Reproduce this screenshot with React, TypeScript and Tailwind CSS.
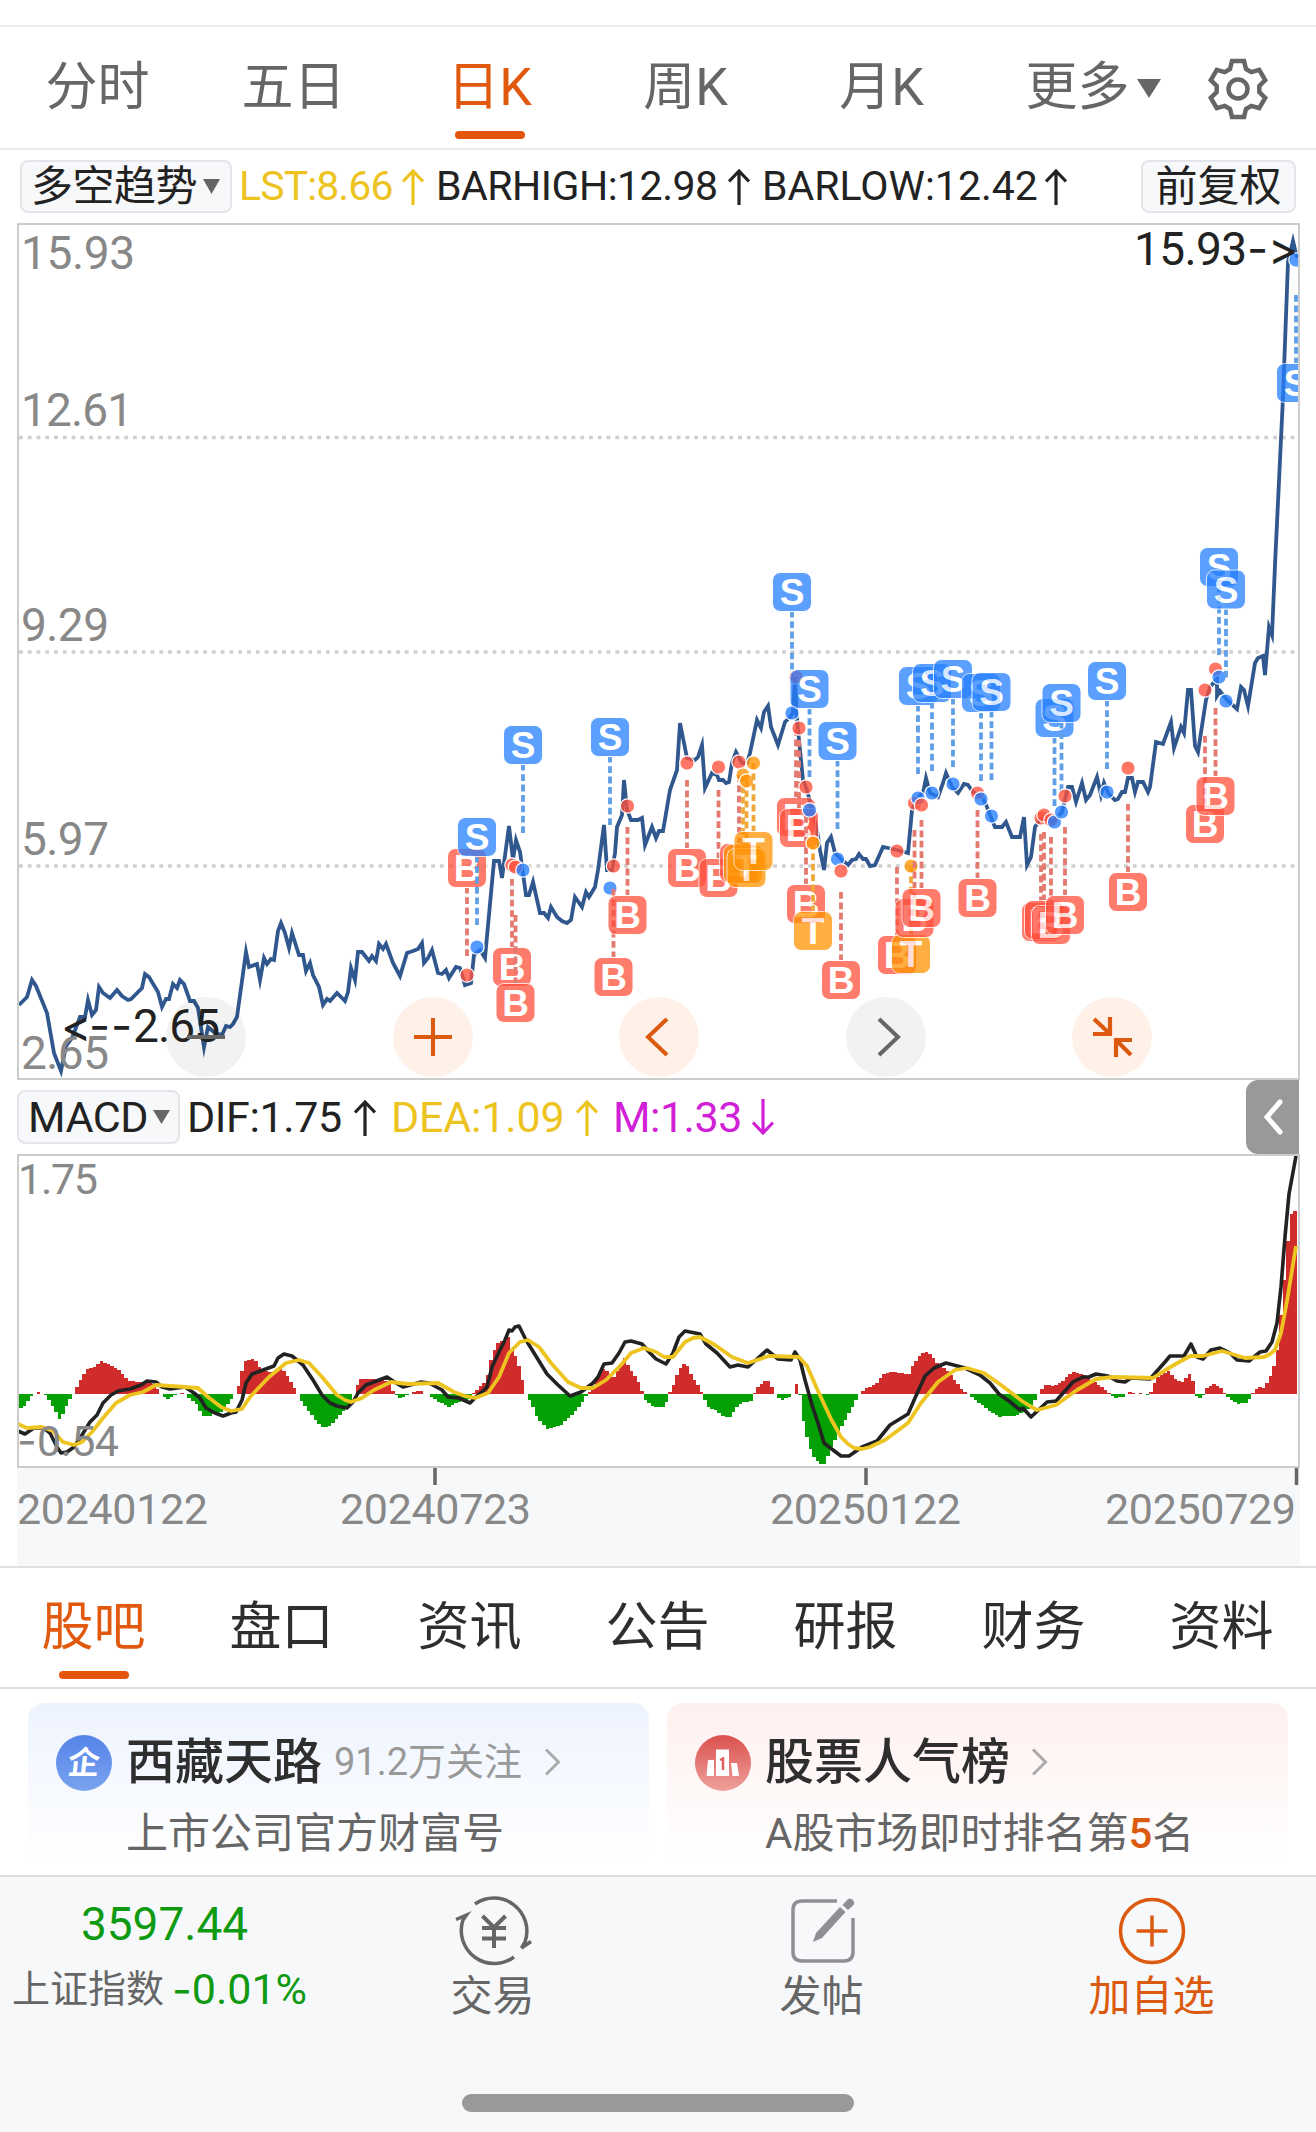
import { clsx } from "clsx"
import type { ReactNode } from "react"

/**
 * Stock detail page: K-line chart with buy/sell markers, MACD panel,
 * community tabs and the bottom action bar.
 */

type Point = [number, number]

type MarkerType = "B" | "S" | "T"

interface Marker {
  type: MarkerType
  x: number
  dot: number
  badge: number
}

const PERIOD_TABS = ["分时", "五日", "日K", "周K", "月K"]
const INFO_TABS = ["股吧", "盘口", "资讯", "公告", "研报", "财务", "资料"]

const PRICE_LINE =
  "19,1005 23,1001 27,997 32,980 36,986 47,1013 54,1053 61,1071 66,1046 72,1038 80,1017 85,1017 88,1000 92,1015 96,1010 99,987 103,993 110,998 117,990 122,996 128,1000 131,999 142,988 145,974 149,977 158,992 162,1007 166,999 169,999 173,984 177,988 180,980 184,984 190,1001 194,1001 198,1008 204,1047 208,1027 215,1033 222,1035 226,1026 230,1027 233,1024 237,1017 246,952 249,967 257,964 260,980 264,958 267,964 271,959 274,960 278,931 281,923 285,933 289,948 292,933 299,955 303,955 306,971 310,963 313,975 319,987 323,1005 327,999 330,1001 337,993 345,1001 348,992 351,968 355,980 358,952 362,952 369,961 372,956 376,961 379,944 383,949 386,944 393,963 400,976 407,953 413,951 418,949 422,943 424,963 428,958 432,950 438,973 442,974 446,970 449,978 456,967 460,968 465,985 471,983 474,955 480,950 485,958 494,861 499,861 502,878 509,826 513,860 516,840 520,852 526,895 529,895 533,882 540,913 544,913 548,918 551,907 557,917 562,921 567,923 571,920 575,897 582,907 586,892 589,897 595,887 598,870 604,825 607,870 612,870 615,853 617,827 622,815 624,780 627,810 631,820 638,820 642,818 645,845 652,827 656,838 659,831 663,831 670,790 677,770 680,723 687,758 695,760 698,757 702,745 705,788 712,773 717,775 719,780 723,780 726,783 729,782 732,763 736,752 742,763 747,763 750,753 757,720 761,728 764,712 768,706 771,727 778,745 785,722 790,717 793,713 795,677 797,720 803,780 807,790 817,830 820,850 824,870 827,843 831,837 835,853 842,860 848,865 852,860 856,859 859,854 863,859 866,859 870,866 875,865 883,847 888,848 897,850 908,853 912,810 918,797 923,793 926,778 930,793 938,797 943,783 946,773 952,787 958,793 964,784 968,785 973,792 982,797 987,807 992,820 995,827 1002,827 1006,822 1012,837 1020,837 1024,817 1027,865 1031,857 1035,827 1042,817 1053,822 1062,812 1068,787 1072,787 1076,802 1082,783 1086,800 1090,795 1097,777 1101,795 1104,783 1108,793 1115,800 1118,799 1122,792 1125,792 1128,778 1132,778 1135,792 1138,782 1143,782 1148,792 1150,787 1156,742 1163,744 1171,722 1174,748 1181,727 1184,733 1188,690 1191,690 1195,746 1198,752 1206,700 1210,687 1217,679 1217,696 1220,691 1227,700 1237,709 1241,687 1244,690 1248,706 1255,663 1258,658 1263,656 1265,675 1269,627 1272,635 1275,565 1283,397 1288,262 1293,241 1297,258"

const MARKERS: Marker[] = [
  { type: "B", x: 467, dot: 975, badge: 868 },
  { type: "S", x: 477, dot: 947, badge: 837 },
  { type: "B", x: 512, dot: 865, badge: 967 },
  { type: "B", x: 515.5, dot: 867, badge: 1003 },
  { type: "S", x: 523, dot: 870, badge: 745 },
  { type: "S", x: 610, dot: 888, badge: 737 },
  { type: "B", x: 613.5, dot: 866, badge: 977 },
  { type: "B", x: 627.5, dot: 806, badge: 915 },
  { type: "B", x: 687, dot: 763, badge: 868 },
  { type: "B", x: 718.5, dot: 767, badge: 878 },
  { type: "B", x: 739, dot: 762, badge: 863 },
  { type: "T", x: 743, dot: 775, badge: 864 },
  { type: "T", x: 746.5, dot: 781, badge: 868 },
  { type: "T", x: 753.5, dot: 763, badge: 851 },
  { type: "S", x: 792, dot: 713, badge: 592 },
  { type: "B", x: 796, dot: 677, badge: 817 },
  { type: "B", x: 799, dot: 728, badge: 828 },
  { type: "B", x: 806, dot: 787, badge: 904 },
  { type: "S", x: 809.5, dot: 810, badge: 689 },
  { type: "T", x: 813, dot: 843, badge: 931 },
  { type: "S", x: 837.5, dot: 859, badge: 741 },
  { type: "B", x: 841, dot: 871, badge: 980 },
  { type: "B", x: 897, dot: 851, badge: 955 },
  { type: "T", x: 911, dot: 866, badge: 954 },
  { type: "B", x: 914.5, dot: 803, badge: 918 },
  { type: "S", x: 918, dot: 798, badge: 686 },
  { type: "B", x: 921.5, dot: 805, badge: 908 },
  { type: "S", x: 932, dot: 793, badge: 683 },
  { type: "S", x: 953, dot: 784, badge: 679 },
  { type: "B", x: 977.5, dot: 793, badge: 898 },
  { type: "S", x: 981, dot: 799, badge: 693 },
  { type: "S", x: 991.5, dot: 816, badge: 692 },
  { type: "B", x: 1041, dot: 818, badge: 922 },
  { type: "B", x: 1044, dot: 815, badge: 920 },
  { type: "B", x: 1051, dot: 820, badge: 925 },
  { type: "S", x: 1054.5, dot: 822, badge: 718 },
  { type: "S", x: 1061.5, dot: 812, badge: 703 },
  { type: "B", x: 1065, dot: 796, badge: 915 },
  { type: "S", x: 1107, dot: 792, badge: 681 },
  { type: "B", x: 1128, dot: 768, badge: 892 },
  { type: "B", x: 1205, dot: 690, badge: 824 },
  { type: "B", x: 1215.5, dot: 669, badge: 796 },
  { type: "S", x: 1219, dot: 677, badge: 567 },
  { type: "S", x: 1226, dot: 701, badge: 589.5 },
  { type: "S", x: 1296, dot: 260, badge: 383 },
]

const MARKER_COLORS: Record<MarkerType, string> = {
  B: "#ff4f3c",
  S: "#257fff",
  T: "#ff9303",
}

const DASH_COLORS: Record<MarkerType, string> = {
  B: "#e4796f",
  S: "#5f9fe6",
  T: "#f0a83a",
}

const ZERO_Y = 1393.7
const BAR_STEP = 3.51

// Histogram key values, bars in between are interpolated
const HIST: Point[] = [
  [18, -14], [23, -14], [26, -10], [30, -3], [35, 0], [38, 2], [42, 0], [46, -2], [51, -10], [55, -17], [60, -27], [65, -15], [71, -3], [73, 0],
  [76, 0], [77, 7], [82, 17], [87, 25], [97, 27], [100, 34], [105, 31], [111, 28], [120, 23], [128, 13], [135, 12], [147, 12], [154, 10], [160, 1],
  [162, -2], [168, -5], [175, -1], [181, 1], [185, 1], [188, -3], [196, -10], [202, -22], [210, -22], [223, -17], [231, -6], [235, 0], [237, 2],
  [239, 10], [242, 23], [245, 33], [252, 35], [257, 32], [260, 25], [269, 22], [276, 22], [282, 25], [288, 17], [295, 5], [298, 0], [303, -10],
  [311, -20], [318, -30], [324, -34], [330, -32], [337, -25], [349, -12], [354, -1], [357, 7], [361, 15], [372, 15], [381, 14], [389, 11],
  [393, 2], [396, -1], [401, -5], [408, -1], [414, 2], [421, 3], [424, 0], [429, -1], [438, -8], [449, -13], [459, -8], [471, -5], [473, 0],
  [478, 5], [486, 12], [490, 30], [494, 43], [499, 52], [505, 53], [509, 57], [511, 45], [517, 36], [522, 17], [525, 1], [527, -2], [532, -10],
  [537, -23], [547, -35], [560, -32], [570, -23], [579, -13], [587, -1], [590, 2], [595, 12], [602, 25], [606, 23], [614, 17], [619, 25], [624, 37],
  [629, 27], [638, 13], [643, 0], [646, -7], [654, -13], [665, -13], [669, 0], [673, 7], [677, 18], [683, 31], [688, 27], [694, 14], [700, 7],
  [703, -2], [709, -14], [717, -17], [723, -23], [730, -23], [736, -14], [742, -9], [751, -7], [754, 0], [757, 6], [767, 15], [772, 7], [775, 0],
  [778, -4], [782, -6], [791, -3], [793, 0], [795, 10], [797, 9], [798, 0], [800, -1], [802, -21], [807, -43], [812, -61], [818, -68], [824, -72],
  [828, -62], [833, -50], [841, -34], [850, -18], [858, -3], [860, 0], [864, 4], [877, 10], [883, 19], [890, 22], [904, 20], [908, 18], [913, 29],
  [919, 37], [925, 43], [932, 38], [938, 29], [946, 24], [953, 16], [961, 5], [968, 0], [974, -5], [988, -16], [999, -23], [1014, -22], [1026, -18],
  [1035, -7], [1039, 0], [1042, 5], [1047, 10], [1054, 7], [1062, 12], [1073, 22], [1085, 18], [1096, 11], [1106, 3], [1110, 0], [1115, -4],
  [1125, -3], [1127, 1], [1131, 2], [1136, 0], [1141, 1], [1146, -2], [1150, -1], [1153, 7], [1157, 16], [1169, 23], [1176, 14], [1184, 11],
  [1187, 18], [1191, 21], [1195, 5], [1196, -2], [1202, -5], [1204, 0], [1207, 6], [1214, 10], [1222, 5], [1225, 0], [1230, -5], [1237, -10],
  [1247, -9], [1252, 0], [1258, 7], [1264, 6], [1268, 12], [1272, 21], [1277, 40], [1281, 80], [1285, 120], [1289, 165], [1292, 184], [1297, 181],
]

const DIF_LINE =
  "18,1431 25,1434 34,1428 44,1428 50,1433 57,1447 61,1453 67,1452 74,1447 82,1435 90,1422 97,1415 103,1403 111,1395 118,1391 130,1389 141,1385 147,1381 156,1382 162,1387 170,1389 185,1387 194,1393 200,1398 206,1408 215,1413 223,1416 231,1413 236,1412 242,1400 246,1383 252,1374 263,1370 274,1366 278,1358 284,1354 292,1356 303,1365 313,1380 322,1395 330,1403 337,1406 347,1408 353,1402 358,1393 366,1385 379,1380 387,1377 396,1383 403,1387 414,1384 421,1382 429,1383 442,1390 448,1397 459,1398 470,1403 476,1397 482,1392 487,1387 492,1367 499,1352 505,1340 509,1330 512,1331 515,1327 519,1326 526,1340 534,1353 547,1374 558,1385 570,1396 581,1392 593,1383 598,1377 604,1364 612,1363 619,1353 625,1342 631,1341 642,1344 650,1353 656,1359 666,1364 673,1353 679,1337 685,1331 700,1334 706,1344 717,1353 730,1367 738,1365 748,1367 757,1359 767,1350 778,1359 791,1360 795,1352 800,1360 805,1380 812,1405 818,1423 824,1443 833,1450 841,1456 849,1456 862,1447 877,1441 890,1425 908,1414 915,1398 925,1376 934,1368 946,1363 965,1368 980,1375 990,1383 999,1394 1009,1401 1020,1410 1023,1408 1031,1417 1047,1402 1056,1401 1064,1392 1073,1382 1083,1377 1089,1377 1096,1374 1108,1376 1117,1381 1125,1382 1131,1378 1150,1379 1157,1371 1165,1362 1170,1356 1184,1356 1191,1344 1197,1357 1203,1359 1211,1350 1220,1348 1230,1353 1237,1360 1249,1361 1260,1352 1266,1351 1272,1342 1277,1323 1281,1287 1285,1237 1289,1194 1296,1156"

const DEA_LINE =
  "18,1424 27,1428 42,1427 53,1431 63,1442 74,1445 82,1442 92,1432 103,1418 116,1403 130,1395 143,1392 156,1385 185,1387 198,1388 208,1397 221,1407 231,1411 242,1409 250,1397 269,1377 286,1363 299,1360 309,1363 322,1377 337,1395 345,1400 351,1402 362,1398 374,1390 391,1382 408,1384 438,1383 454,1392 465,1396 475,1398 488,1393 499,1377 509,1353 520,1342 528,1340 539,1347 551,1363 568,1382 581,1388 593,1388 606,1380 621,1365 631,1353 644,1348 656,1352 664,1357 673,1357 685,1342 693,1338 700,1337 715,1345 732,1357 748,1363 769,1356 799,1357 807,1366 818,1391 831,1419 841,1437 848,1444 854,1448 862,1449 870,1447 885,1440 908,1423 921,1403 938,1382 955,1370 967,1368 984,1373 1001,1385 1022,1401 1030,1406 1037,1410 1056,1405 1077,1390 1096,1379 1113,1377 1153,1378 1167,1369 1190,1356 1203,1356 1222,1351 1245,1358 1264,1357 1270,1354 1275,1350 1281,1333 1287,1301 1296,1246"

function histAt(x: number): number {
  for (let i = 1; i < HIST.length; i++) {
    const [x0, v0] = HIST[i - 1]
    const [x1, v1] = HIST[i]
    if (x <= x1) return v0 + ((v1 - v0) * (x - x0)) / (x1 - x0)
  }
  return HIST[HIST.length - 1][1]
}

const BARS: Point[] = Array.from({ length: 364 }, (_, i) => {
  const x = 19 + i * BAR_STEP
  return [x, histAt(x + BAR_STEP / 2)]
})

function TradeMarker({ type, x, dot, badge }: Marker) {
  const above = badge < dot
  const dashStart = above ? badge + 20 : badge - 20
  const dashEnd = above ? badge + 88 : badge - 88

  return (
    <g>
      <line x1={x} x2={x} y1={dashEnd} y2={dashStart} stroke={DASH_COLORS[type]} strokeWidth="3.8" strokeDasharray="6.8 3.6" />
      <g opacity="0.75">
        <rect x={x - 19.5} y={badge - 19.5} width="39" height="39" rx="8" fill={MARKER_COLORS[type]} stroke="#fff" strokeWidth="1" />
        <text x={x} y={badge + 13} fill="#fff" fontSize="37" fontWeight="700" textAnchor="middle" className="font-['Liberation_Sans',sans-serif]">
          {type}
        </text>
      </g>
      <circle cx={x} cy={dot} r="7.2" fill={MARKER_COLORS[type]} fillOpacity="0.78" stroke="#fff" strokeWidth="1.2" />
    </g>
  )
}

function PriceChart() {
  const levels = [
    { label: "15.93", y: 269, w: 111 },
    { label: "12.61", y: 426, w: 109 },
    { label: "9.29", y: 641, w: 85 },
    { label: "5.97", y: 855, w: 85 },
    { label: "2.65", y: 1069, w: 85 },
  ]

  return (
    <svg className="block h-full w-full" viewBox="19 225 1279 853">
      {[437.5, 652, 866].map((y) => (
        <line key={y} x1="19" x2="1298" y1={y} y2={y} stroke="#cfcfcf" strokeWidth="3.5" strokeDasharray="3.8 4.97" />
      ))}
      <polyline points={PRICE_LINE} fill="none" stroke="#30588f" strokeWidth="3.8" strokeMiterlimit="6" />
      {levels.map((l) => (
        <text key={l.label} x="21" y={l.y} textLength={l.w + 3} fill="#888" fontSize="46">
          {l.label}
        </text>
      ))}
      {MARKERS.map((m, i) => (
        <TradeMarker key={i} {...m} />
      ))}
      <g fill="#222" fontSize="46">
        <text x="1134" y="265" textLength="113">15.93</text>
        <text y="265" className="font-[Inter,sans-serif]">
          <tspan x="1247">-</tspan>
          <tspan x="1268">&gt;</tspan>
        </text>
        <text y="1042" className="font-[Inter,sans-serif]">
          <tspan x="61">&lt;</tspan>
          <tspan x="89">-</tspan>
          <tspan x="111">-</tspan>
        </text>
        <text x="133" y="1042" textLength="87">2.65</text>
      </g>
    </svg>
  )
}

function ChartControl({ tone, children }: { tone: "gray" | "orange"; children: ReactNode }) {
  return (
    <button
      className={clsx(
        "flex h-20 w-20 items-center justify-center rounded-full",
        tone === "gray" ? "bg-black/5 text-[#666]" : "bg-[#ff6a1a]/10 text-[#dc5a10]",
      )}
    >
      <svg className="h-20 w-20" viewBox="-40 -40 80 80" fill="none" stroke="currentColor" strokeWidth="4">
        {children}
      </svg>
    </button>
  )
}

function MacdChart() {
  return (
    <svg className="block h-full w-full" viewBox="19 1156 1279 310">
      {BARS.map(([x, v]) => (
        <rect
          key={x}
          x={x}
          y={v > 0 ? ZERO_Y - v : ZERO_Y}
          width={BAR_STEP}
          height={Math.abs(v) < 0.4 ? 0 : Math.abs(v)}
          fill={v > 0 ? "#d02c2c" : "#04a004"}
          shapeRendering="crispEdges"
        />
      ))}
      <polyline points={DIF_LINE} fill="none" stroke="#222" strokeWidth="3.6" strokeLinejoin="round" />
      <polyline points={DEA_LINE} fill="none" stroke="#edc420" strokeWidth="3.8" strokeLinejoin="round" />
      <g fill="#888" fontSize="43">
        <text x="18" y="1194" textLength="80">1.75</text>
        <text x="17" y="1456" className="font-[Inter,sans-serif]">-</text>
        <text x="37" y="1456" textLength="82">0.54</text>
      </g>
    </svg>
  )
}

function Triangle({ className }: { className: string }) {
  return (
    <svg className={className} viewBox="0 0 24 20" preserveAspectRatio="none" fill="#666">
      <path d="M0 0h24L12 20z" />
    </svg>
  )
}

function Arrow({ down = false }: { down?: boolean }) {
  return (
    <svg className={clsx("h-[37px] w-[22px]", down && "rotate-180")} viewBox="0 0 22 37" fill="none" stroke="currentColor" strokeWidth="3.2">
      <path d="M11 37V3M1 13.500L11 3l10 10.500" />
    </svg>
  )
}

function ChevronRight() {
  return (
    <svg className="h-[28px] w-[17px]" viewBox="0 0 17 28" fill="none" stroke="#aaa" strokeWidth="3">
      <path d="M2 1.500L14.500 14 2 26.500" />
    </svg>
  )
}

export default function App() {
  return (
    <div className="flex h-[2132px] w-[1316px] flex-col overflow-hidden bg-white font-[Roboto,'Noto_Sans_CJK_SC',sans-serif] whitespace-nowrap text-[#222]">
      <div className="h-[27px] shrink-0 border-b-2 border-[#ebebeb]" />

      {/* Period tabs */}
      <div className="flex h-[123px] shrink-0 border-b-2 border-[#ebebeb] text-[52px] text-[#666]">
        {PERIOD_TABS.map((tab) => (
          <div key={tab} className={clsx("flex w-[196px] flex-col items-center", tab === "日K" && "text-[#e0590f]")}>
            <span className="mt-[19px] mr-px leading-[84px]">{tab}</span>
            {tab === "日K" && <span className="mt-px h-2 w-[70px] rounded-full bg-[#e4560a]" />}
          </div>
        ))}
        <div className="flex w-[226px] items-start justify-center gap-[7px]">
          <span className="mt-[19px] leading-[84px]">更多</span>
          <Triangle className="mt-[52px] h-[19px] w-6" />
        </div>
        <svg className="mt-[28px] h-[68px] w-[64px]" viewBox="-32 -34 64 68" fill="none" stroke="#666" strokeWidth="4.500">
          <path d="M-8 -20L-6 -28L6 -28L8 -20L13.300 -16.900L21.200 -19.200L27.200 -8.800L21.300 -3.100V3.100L27.200 8.800L21.200 19.200L13.300 16.900L8 20L6 28H-6L-8 20L-13.300 16.900L-21.200 19.200L-27.200 8.800L-21.300 3.100V-3.100L-27.200 -8.800L-21.200 -19.200L-13.300 -16.900Z" />
          <circle r="9.500" />
        </svg>
      </div>

      {/* Main indicator row */}
      <div className="flex h-[73px] shrink-0 items-center pr-5 pl-5 text-[41px]">
        <button className="flex h-[53px] w-[212px] items-center gap-[6px] rounded-lg border-2 border-[#e3e5ea] bg-[#f7f8fa] pl-[9px]">
          <span className="text-[42px] leading-none tracking-[-0.5px]">多空趋势</span>
          <Triangle className="h-[15px] w-[17px]" />
        </button>
        <span className="ml-[7px] w-[155px] tracking-[-0.9px] text-[#edc31f]">LST:8.66</span>
        <span className="ml-[8px] text-[#edc31f]"><Arrow /></span>
        <span className="ml-[12px] w-[285px] tracking-[-0.5px]">BARHIGH:12.98</span>
        <span className="ml-[7px]"><Arrow /></span>
        <span className="ml-[12px] w-[276px]">BARLOW:12.42</span>
        <span className="ml-[7px]"><Arrow /></span>
        <button className="ml-auto flex h-[53px] w-[155px] items-center justify-center rounded-lg border-2 border-[#e3e5ea] bg-[#f7f8fa] text-[42px] leading-none">
          前复权
        </button>
      </div>

      {/* K-line chart */}
      <div className="relative mx-[17px] h-[857px] w-[1283px] shrink-0 border-2 border-[#ccc]">
        <PriceChart />
        <div className="absolute bottom-px left-[147px] flex gap-[146.6px]">
          <ChartControl tone="gray">
            <path d="M-19 0H19" />
          </ChartControl>
          <ChartControl tone="orange">
            <path d="M-19 0H19M0 -19V19" />
          </ChartControl>
          <ChartControl tone="orange">
            <path d="M8 -18L-11 0L8 18" />
          </ChartControl>
          <ChartControl tone="gray">
            <path d="M-7 -18L12 0L-7 18" />
          </ChartControl>
          <ChartControl tone="orange">
            <path d="M-18 -18L-3 -4M-2 -20V-3H-19M19 18L5 4M4 20V3H20" strokeWidth="4.200" />
          </ChartControl>
        </div>
      </div>

      {/* MACD header */}
      <div className="flex h-[74px] shrink-0 items-center pr-[17px] pl-[17px] text-[43px]">
        <button className="flex h-[54px] w-[163px] items-center gap-[5px] rounded-lg border-2 border-[#e3e5ea] bg-[#f7f8fa] pl-[9px]">
          <span className="leading-none tracking-[-0.5px]">MACD</span>
          <Triangle className="h-[14px] w-[17px]" />
        </button>
        <span className="ml-[7px] w-[159px] tracking-[-0.4px]">DIF:1.75</span>
        <span className="ml-[8px]"><Arrow /></span>
        <span className="ml-[15px] w-[174px] tracking-[-0.2px] text-[#edc31f]">DEA:1.09</span>
        <span className="ml-[11px] text-[#edc31f]"><Arrow /></span>
        <span className="ml-[15px] w-[130px] tracking-[-0.5px] text-[#d021d6]">M:1.33</span>
        <span className="ml-[9px] text-[#d021d6]"><Arrow down /></span>
        <button className="ml-auto flex h-[74px] w-[53px] items-center justify-center rounded-l-xl bg-[#999]">
          <svg className="ml-[2px] h-[38px] w-[24px]" viewBox="0 0 24 38" fill="none" stroke="#fff" strokeWidth="5" strokeLinecap="round">
            <path d="M18 4L5 19l13 15" />
          </svg>
        </button>
      </div>

      {/* MACD chart and date axis */}
      <div className="mx-[17px] h-[314px] w-[1283px] shrink-0 border-2 border-[#ccc]">
        <MacdChart />
      </div>
      <div className="mx-[17px] h-[98px] w-[1283px] shrink-0 bg-[#f7f8fa]">
        <svg className="block h-full w-full" viewBox="17 1468 1283 98">
          {[435, 866, 1296.5].map((x) => (
            <path key={x} d={`M${x} 1467V1485`} stroke="#666" strokeWidth="3.5" />
          ))}
          <g fill="#888" fontSize="43">
            <text x="17" y="1524" textLength="191">20240122</text>
            <text x="340" y="1524" textLength="191">20240723</text>
            <text x="770" y="1524" textLength="191">20250122</text>
            <text x="1105" y="1524" textLength="191">20250729</text>
          </g>
        </svg>
      </div>

      {/* Info tabs */}
      <div className="flex h-[123px] shrink-0 border-y-2 border-[#e0e0e0] text-[52px] text-[#2e2e2e]">
        {INFO_TABS.map((tab, i) => (
          <div key={tab} className={clsx("flex flex-1 flex-col items-center", i === 0 && "text-[#e0590f]")}>
            <span className="mt-[18px] mr-px leading-[84px]">{tab}</span>
            {i === 0 && <span className="mt-px h-2 w-[70px] rounded-full bg-[#e4560a]" />}
          </div>
        ))}
      </div>

      {/* Entry cards */}
      <div className="flex h-[186px] shrink-0 gap-[18px] px-7 pt-[14px]">
        <div className="flex h-[172px] w-[621px] gap-[14px] rounded-t-2xl bg-linear-to-b from-[#edf3fe] to-white to-90% pl-7">
          <div className="mt-8 flex h-14 w-14 items-center justify-center rounded-full bg-linear-to-b from-[#5584ea] to-[#7aa2ee]">
            <span className="-skew-x-6 text-[32px] leading-none font-bold text-white">企</span>
          </div>
          <div className="flex flex-col">
            <div className="mt-[27px] flex h-16 items-center">
              <span className="text-[49px] leading-none font-medium text-[#2e2e2e]">西藏天路</span>
              <span className="mr-[22px] ml-3 text-[38px] leading-none text-[#999]">91.2万关注</span>
              <ChevronRight />
            </div>
            <span className="mt-[12px] text-[42px] leading-[56px] text-[#666]">上市公司官方财富号</span>
          </div>
        </div>
        <div className="flex h-[172px] w-[621px] gap-[14px] rounded-t-2xl bg-linear-to-b from-[#fef0ef] to-white to-90% pl-7">
          <svg className="mt-8 h-14 w-14" viewBox="0 0 56 56">
            <defs>
              <linearGradient id="rank" x1="0" y1="0" x2="0" y2="1">
                <stop offset="0" stopColor="#db514e" />
                <stop offset="1" stopColor="#efa09b" />
              </linearGradient>
            </defs>
            <circle cx="28" cy="28" r="28" fill="url(#rank)" />
            <path d="M13 25h6v16h-7.500zM21 14.500h13V41H21zM36 28h6l2 13h-6.500z" fill="#fff" />
            <path d="M25 25l3-1.500V35" fill="none" stroke="#db625e" strokeWidth="2.500" />
          </svg>
          <div className="flex flex-col">
            <div className="mt-[27px] flex h-16 items-center">
              <span className="mr-[21px] text-[49px] leading-none font-medium text-[#2e2e2e]">股票人气榜</span>
              <ChevronRight />
            </div>
            <span className="mt-[12px] text-[42px] leading-[56px] text-[#666]">
              A股市场即时排名第<span className="font-medium text-[#dc5a10]">5</span>名
            </span>
          </div>
        </div>
      </div>

      {/* Bottom action bar */}
      <div className="flex flex-1 flex-col border-t-2 border-[#dcdde0] bg-[#f7f8fa]">
        <div className="flex h-[217px] text-[42px] text-[#666]">
          <div className="flex w-[329px] flex-col items-center text-[#0f9a12]">
            <span className="mt-[19px] text-[46px] leading-[56px]">3597.44</span>
            <div className="mt-[7px] mr-[10px] flex items-center gap-[8px] leading-[60px]">
              <span className="text-[38px] text-[#666]">上证指数</span>
              <span className="flex text-[43px]">
                <span className="font-[Inter,sans-serif]">-</span>
                0.01%
              </span>
            </div>
          </div>
          <div className="flex w-[329px] flex-col items-center">
            <svg className="mt-[16px] h-[76px] w-[80px]" viewBox="-40 -38 80 76" fill="none" stroke="#666" strokeWidth="3.500">
              <path d="M-19 -27A33 33 0 0 1 31 11L27.500 17L37 10.500" />
              <path d="M20 26A33 33 0 0 1 -31 -11L-27.500 -16L-38 -11.500" />
              <path d="M-11.500 -15L0 -3.500L11.500 -15M-12 -3H12M-12 7.500H12M0 -3V17" strokeWidth="4" />
            </svg>
            <span className="mt-[2px] mr-[2px] leading-[52px]">交易</span>
          </div>
          <div className="flex w-[329px] flex-col items-center">
            <svg className="mt-[16px] h-[76px] w-[68px]" viewBox="-2 -6 68 76" fill="none" stroke="#8f8f96" strokeWidth="3.500">
              <path d="M46 2H11Q2 2 2 11V53Q2 62 11 62H53Q62 62 62 53V19" />
              <path d="M22 43L25 34L49 8L54.500 13L31 39Z" fill="#8f8f96" stroke="none" />
              <path d="M51.500 6L57 0Q60 -1 62 1Q64 4 62.500 6L57 11Z" fill="#8f8f96" stroke="none" />
            </svg>
            <span className="mt-[2px] mr-[2px] leading-[52px]">发帖</span>
          </div>
          <div className="flex w-[329px] flex-col items-center text-[#dc5a10]">
            <svg className="mt-[16px] h-[76px] w-[76px]" viewBox="-38 -38 76 76" fill="none" stroke="currentColor" strokeWidth="3.500">
              <circle r="31.500" />
              <path d="M-15.500 0H15.500M0 -15.500V15.500" />
            </svg>
            <span className="mt-[2px] leading-[52px]">加自选</span>
          </div>
        </div>
        <div className="mx-auto h-[18px] w-[392px] rounded-full bg-[#999]" />
      </div>
    </div>
  )
}
